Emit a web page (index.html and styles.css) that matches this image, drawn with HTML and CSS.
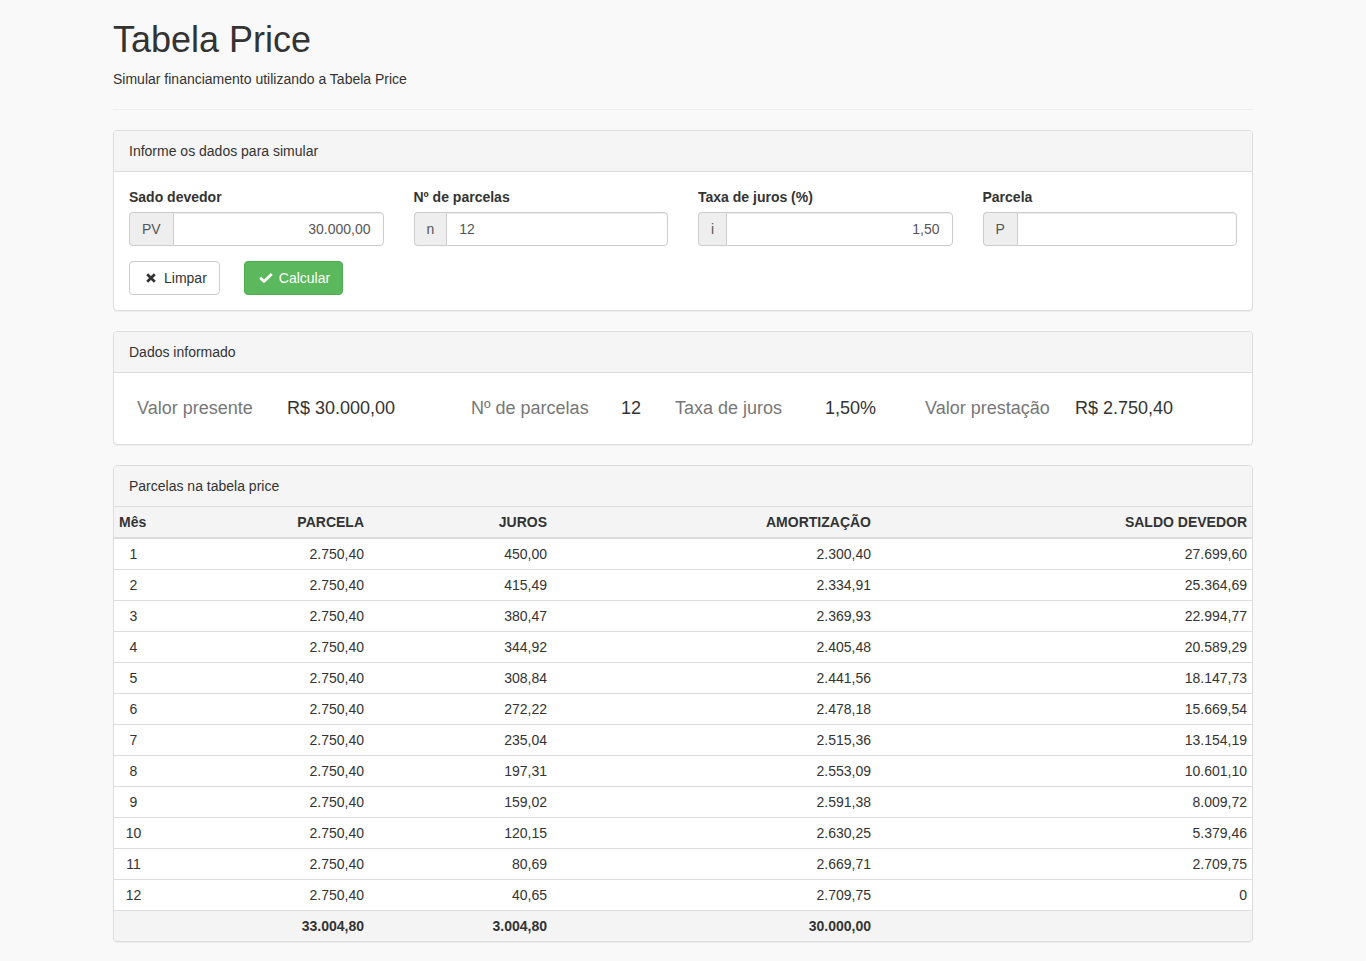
FILE: index.html
```html
<!DOCTYPE html>
<html lang="pt-BR">
<head>
<meta charset="utf-8">
<title>Tabela Price</title>
<link rel="stylesheet" href="styles.css">
</head>
<body>
<div class="container">
  <div class="page-header">
    <h1>Tabela Price</h1>
    <p>Simular financiamento utilizando a Tabela Price</p>
  </div>

  <div class="panel">
    <div class="panel-heading">Informe os dados para simular</div>
    <div class="panel-body">
      <div class="row">
        <div class="col">
          <label class="label">Sado devedor</label>
          <div class="input-group">
            <span class="addon">PV</span>
            <input class="form-control right" type="text" value="30.000,00">
          </div>
        </div>
        <div class="col">
          <label class="label">Nº de parcelas</label>
          <div class="input-group">
            <span class="addon">n</span>
            <input class="form-control" type="text" value="12">
          </div>
        </div>
        <div class="col">
          <label class="label">Taxa de juros (%)</label>
          <div class="input-group">
            <span class="addon">i</span>
            <input class="form-control right" type="text" value="1,50">
          </div>
        </div>
        <div class="col">
          <label class="label">Parcela</label>
          <div class="input-group">
            <span class="addon">P</span>
            <input class="form-control" type="text" value="">
          </div>
        </div>
      </div>
      <div class="actions">
        <button class="btn btn-default" type="button"><span class="icon"><svg width="10" height="10" viewBox="0 0 10 10"><path d="M1.2 1.2 L8.8 8.8 M8.8 1.2 L1.2 8.8" stroke="#333" stroke-width="2.7" fill="none"/></svg></span>Limpar</button>
        <button class="btn btn-success" type="button"><span class="icon"><svg width="14" height="10" viewBox="0 0 14 10"><path d="M1.2 4.8 L5 8.4 L12.8 1" stroke="#fff" stroke-width="2.8" fill="none" stroke-linejoin="miter"/></svg></span>Calcular</button>
      </div>
    </div>
  </div>

  <div class="panel">
    <div class="panel-heading">Dados informado</div>
    <div class="panel-body summary">
      <span class="s-label">Valor presente</span><span class="s-value">R$ 30.000,00</span>
      <span class="s-label">Nº de parcelas</span><span class="s-value">12</span>
      <span class="s-label">Taxa de juros</span><span class="s-value">1,50%</span>
      <span class="s-label">Valor prestação</span><span class="s-value">R$ 2.750,40</span>
    </div>
  </div>

  <div class="panel panel-table">
    <div class="panel-heading">Parcelas na tabela price</div>
    <table class="table">
      <colgroup>
        <col class="c-mes"><col class="c-parcela"><col class="c-juros"><col class="c-amort"><col class="c-saldo">
      </colgroup>
      <thead>
        <tr><th class="left">Mês</th><th>PARCELA</th><th>JUROS</th><th>AMORTIZAÇÃO</th><th>SALDO DEVEDOR</th></tr>
      </thead>
      <tbody>
        <tr><td class="center">1</td><td>2.750,40</td><td>450,00</td><td>2.300,40</td><td>27.699,60</td></tr>
        <tr><td class="center">2</td><td>2.750,40</td><td>415,49</td><td>2.334,91</td><td>25.364,69</td></tr>
        <tr><td class="center">3</td><td>2.750,40</td><td>380,47</td><td>2.369,93</td><td>22.994,77</td></tr>
        <tr><td class="center">4</td><td>2.750,40</td><td>344,92</td><td>2.405,48</td><td>20.589,29</td></tr>
        <tr><td class="center">5</td><td>2.750,40</td><td>308,84</td><td>2.441,56</td><td>18.147,73</td></tr>
        <tr><td class="center">6</td><td>2.750,40</td><td>272,22</td><td>2.478,18</td><td>15.669,54</td></tr>
        <tr><td class="center">7</td><td>2.750,40</td><td>235,04</td><td>2.515,36</td><td>13.154,19</td></tr>
        <tr><td class="center">8</td><td>2.750,40</td><td>197,31</td><td>2.553,09</td><td>10.601,10</td></tr>
        <tr><td class="center">9</td><td>2.750,40</td><td>159,02</td><td>2.591,38</td><td>8.009,72</td></tr>
        <tr><td class="center">10</td><td>2.750,40</td><td>120,15</td><td>2.630,25</td><td>5.379,46</td></tr>
        <tr><td class="center">11</td><td>2.750,40</td><td>80,69</td><td>2.669,71</td><td>2.709,75</td></tr>
        <tr><td class="center">12</td><td>2.750,40</td><td>40,65</td><td>2.709,75</td><td>0</td></tr>
      </tbody>
      <tfoot>
        <tr><td></td><td>33.004,80</td><td>3.004,80</td><td>30.000,00</td><td></td></tr>
      </tfoot>
    </table>
  </div>
</div>
</body>
</html>
```

FILE: styles.css
```css
* { box-sizing: border-box; }
html, body { margin: 0; padding: 0; }
body {
  background: #f9f9f9;
  color: #333;
  font-family: "Liberation Sans", Arial, sans-serif;
  font-size: 14px;
  line-height: 20px;
}
.container {
  width: 1170px;
  margin: 0 auto;
  padding: 0 15px 19px;
}
.page-header {
  padding-bottom: 10px;
  border-bottom: 1px solid #eee;
  margin-bottom: 20px;
}
.page-header h1 {
  margin: 20px 0 9px;
  font-size: 36px;
  font-weight: normal;
  line-height: 1.1;
}
.page-header p { margin: 0 0 10px; }

.panel {
  background: #fff;
  border: 1px solid #ddd;
  border-radius: 4px;
  box-shadow: 0 1px 1px rgba(0,0,0,0.05);
  margin-bottom: 20px;
  overflow: hidden;
}
.panel-heading {
  background: #f5f5f5;
  border-bottom: 1px solid #ddd;
  padding: 10px 15px;
  color: #333;
}
.panel-body { padding: 15px; }

.row {
  display: flex;
  margin: 0 -15px;
}
.col {
  flex: 0 0 25%;
  padding: 0 15px;
  margin-bottom: 15px;
}
.label {
  display: block;
  font-weight: bold;
  margin-bottom: 5px;
}
.input-group {
  display: flex;
  height: 34px;
}
.addon {
  background: #eee;
  border: 1px solid #ccc;
  border-right: 0;
  border-radius: 4px 0 0 4px;
  color: #555;
  padding: 6px 12px;
  line-height: 20px;
}
.form-control {
  flex: 1;
  min-width: 0;
  height: 34px;
  border: 1px solid #ccc;
  border-radius: 0 4px 4px 0;
  box-shadow: inset 0 1px 1px rgba(0,0,0,0.075);
  padding: 6px 12px;
  font-family: inherit;
  font-size: 14px;
  color: #555;
  background: #fff;
}
.form-control.right { text-align: right; }

.actions {
  display: flex;
  gap: 24px;
}
.btn {
  font-family: inherit;
  font-size: 14px;
  line-height: 20px;
  padding: 6px 12px;
  border-radius: 4px;
  border: 1px solid #ccc;
  cursor: pointer;
  display: inline-flex;
  align-items: baseline;
}
.btn-default { background: #fff; color: #333; }
.btn-success { background: #5cb85c; border-color: #4cae4c; color: #fff; }
.icon {
  display: inline-block;
  width: 18px;
  text-align: center;
  margin-right: 4px;
}
.icon svg { display: inline-block; vertical-align: baseline; }

.summary {
  display: grid;
  grid-template-columns: 150px 184px 150px 54px 150px 100px 150px 1fr;
  padding: 15px 23px 16px;
  font-size: 18px;
  line-height: 40px;
}
.s-label { color: #777; }
.s-value { color: #333; }

.table {
  width: 100%;
  border-collapse: collapse;
  table-layout: fixed;
}
.c-mes { width: 39px; }
.c-parcela { width: 216px; }
.c-juros { width: 183px; }
.c-amort { width: 324px; }
.c-saldo { width: 376px; }
.table th, .table td {
  padding: 5px;
  line-height: 20px;
  text-align: right;
  white-space: nowrap;
}
.table thead th {
  background: #f4f4f4;
  font-weight: bold;
  border-bottom: 2px solid #ddd;
}
.table th.left { text-align: left; }
.table tbody td { border-top: 1px solid #ddd; }
.table td.center { text-align: center; }
.table tfoot td {
  background: #f4f4f4;
  font-weight: bold;
  border-top: 1px solid #ddd;
}
```
